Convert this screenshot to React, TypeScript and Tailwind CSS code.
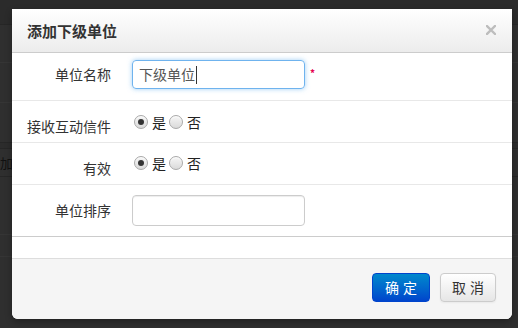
import React from "react";

const font = { fontFamily: '"Noto Sans CJK SC", "Noto Sans", sans-serif' };

function Radio({ checked }: { checked?: boolean }) {
  return (
    <span className="flex h-[14px] w-[14px] items-center justify-center rounded-full border border-[#a9a9a9] bg-gradient-to-b from-[#f6f6f6] to-[#dadada] shadow-[inset_0_1px_1px_rgba(255,255,255,0.8)]">
      {checked && <span className="h-[6px] w-[6px] rounded-full bg-[#333]" />}
    </span>
  );
}

function YesNo() {
  return (
    <div className="flex h-5 items-center text-[14px] text-[#222]">
      <span className="ml-[2px]">
        <Radio checked />
      </span>
      <span className="ml-[4px]">是</span>
      <span className="ml-[3px]">
        <Radio />
      </span>
      <span className="ml-[4px]">否</span>
    </div>
  );
}

export default function App() {
  return (
    <div className="relative h-[328px] w-[518px] overflow-hidden bg-[#2f2f2f]" style={font}>
      {/* page behind the dialog */}
      <div className="flex flex-col">
        <div className="h-[25px] border-b border-[#262626] bg-[#2b2b2b]" />
        <div className="h-[38px] border-b border-[#353535]" />
        <div className="h-[40px] border-b border-[#353535]" />
        <div className="h-[40px] border-b border-[#262626]" />
        <div className="h-[6px] border-b border-[#262626] bg-[#2c2c2c]" />
        <div className="flex h-[28px] items-center border-b border-[#262626] text-[13px] text-[#111]">
          <span>加</span>
        </div>
        <div className="h-[58px] border-b border-[#353535]" />
        <div className="h-[22px] border-b border-[#353535]" />
      </div>

      <div className="absolute left-[12px] top-[9px] flex h-[310px] w-[500px] flex-col overflow-hidden rounded-b-[6px] bg-white shadow-[0_3px_7px_rgba(0,0,0,0.3)]">
        <div className="flex h-[44px] items-center justify-between border-b border-[#cccccc] bg-gradient-to-b from-[#ffffff] to-[#ececec] pl-[15px] pr-[16px]">
          <h3 className="pt-[2px] text-[15px] font-bold text-[#333]">添加下级单位</h3>
          <svg width="10" height="10" viewBox="0 0 10 10" className="mt-[-2px]">
            <path d="M1 1 L9 9 M9 1 L1 9" stroke="#bdbdbd" strokeWidth="2.4" strokeLinecap="square" />
          </svg>
        </div>

        <div className="flex h-[48px] items-start border-b border-[#e8e8e8]">
          <label className="w-[99px] pt-[11px] text-right text-[14px] leading-5 text-[#333]">单位名称</label>
          <div className="ml-[21px] mt-[7px] flex h-[29px] w-[173px] items-center rounded-[4px] border border-[#6fb3ee] pl-[6px] text-[14px] text-[#555] shadow-[0_0_5px_rgba(82,168,236,0.55)]">
            下级单位<span className="ml-[1px] h-[18px] w-px bg-[#333]" />
          </div>
          <span className="ml-[5px] mt-[15px] text-[10px] font-bold leading-none text-[#e5004f]">*</span>
        </div>

        <div className="flex h-[42px] items-start border-b border-[#e8e8e8]">
          <label className="w-[99px] pt-[15px] text-right text-[14px] leading-5 text-[#333]">接收互动信件</label>
          <div className="ml-[21px] pt-[11px]">
            <YesNo />
          </div>
        </div>

        <div className="flex h-[42px] items-start border-b border-[#e8e8e8]">
          <label className="w-[99px] pt-[15px] text-right text-[14px] leading-5 text-[#333]">有效</label>
          <div className="ml-[21px] pt-[10px]">
            <YesNo />
          </div>
        </div>

        <div className="flex h-[52px] items-start border-b border-[#cccccc]">
          <label className="w-[99px] pt-[15px] text-right text-[14px] leading-5 text-[#333]">单位排序</label>
          <div className="ml-[21px] mt-[10px] h-[31px] w-[173px] rounded-[4px] border border-[#cccccc] shadow-[inset_0_1px_1px_rgba(0,0,0,0.075)]" />
        </div>

        <div className="h-[22px] border-b border-[#dddddd]" />

        <div className="flex flex-1 items-start justify-end gap-[10px] bg-[#f5f5f5] pr-[16px] pt-[14px]">
          <button className="flex h-[29px] w-[58px] items-center justify-center rounded-[4px] border border-[#0044cc] bg-gradient-to-b from-[#0088cc] to-[#0044cc] text-[14px] tracking-[4px] text-white">
            <span className="pl-[4px]">确定</span>
          </button>
          <button className="flex h-[29px] w-[56px] items-center justify-center rounded-[4px] border border-[#cccccc] bg-gradient-to-b from-[#ffffff] to-[#e6e6e6] text-[14px] tracking-[4px] text-[#333] shadow-[inset_0_1px_0_rgba(255,255,255,0.2),0_1px_2px_rgba(0,0,0,0.05)]">
            <span className="pl-[4px]">取消</span>
          </button>
        </div>
      </div>
    </div>
  );
}
